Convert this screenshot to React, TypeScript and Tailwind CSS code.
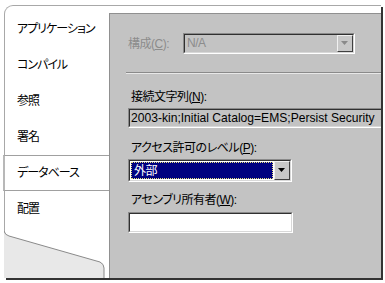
import React from "react";

const tabs = ["アプリケーション", "コンパイル", "参照", "署名", "データベース", "配置"];

const Mnemonic = ({ text, letter }: { text: string; letter: string }) => (
  <span>
    {text}(<u className="underline-offset-1">{letter}</u>):
  </span>
);

const DropButton = ({ disabled }: { disabled?: boolean }) => (
  <div className="flex h-full w-[16px] items-center justify-center border border-t-[#f0f0f0] border-l-[#f0f0f0] border-b-[#404040] border-r-[#404040] bg-[#c8c8c8]">
    <svg width="8" height="5" viewBox="0 0 8 5">
      <path d="M0 0h7L3.5 4z" fill={disabled ? "#8a8a8a" : "#000"} />
    </svg>
  </div>
);

const Sunken = ({
  className,
  innerClass,
  children,
}: {
  className: string;
  innerClass: string;
  children?: React.ReactNode;
}) => (
  <div
    className={`border border-t-[#8a8a8a] border-l-[#8a8a8a] border-b-white border-r-white ${className}`}
  >
    <div
      className={`flex h-full border border-t-[#303030] border-l-[#303030] border-b-[#d8d8d8] border-r-[#d8d8d8] ${innerClass}`}
    >
      {children}
    </div>
  </div>
);

export default function App() {
  return (
    <div className="h-[283px] w-[385px] overflow-hidden bg-white pl-[4px] pt-[5px] font-['Liberation_Sans','Noto_Sans_CJK_JP',sans-serif] text-[12px] leading-[16px] text-black [font-feature-settings:'palt']">
      <div className="flex h-[273px] w-[377px] rounded-tl-[9px] border-l border-t border-[#a8a8a8] shadow-[2px_2px_0_#333]">
        {/* tab list */}
        <div className="relative flex w-[104px] flex-col pt-[5px] tracking-[-1px]">
          {tabs.map((t) =>
            t === "データベース" ? (
              <div
                key={t}
                className="-ml-[2px] flex h-[36px] items-center border-y border-l-2 border-[#a0a0a0] border-l-[#b8b8b8] bg-white pl-[12px]"
              >
                {t}
              </div>
            ) : (
              <div key={t} className="flex h-[36px] items-center pl-[12px]">
                {t}
              </div>
            )
          )}
          <svg
            className="absolute bottom-0 left-[-1px]"
            width="106"
            height="48"
            viewBox="0 0 106 48"
          >
            <path
              d="M0 1 Q1 5 5 6 L96 32 Q100 34 100 38 L100 48 L0 48 Z"
              fill="#e8e8e8"
            />
            <path
              d="M0 1 Q1 5 5 6 L96 32 Q100 34 100 38 L100 48"
              fill="none"
              stroke="#8a8a8a"
              strokeWidth="1"
            />
          </svg>
        </div>

        {/* property page */}
        <div className="mt-[7px] flex flex-1 flex-col overflow-hidden border-l border-t border-[#909090] bg-[#c3c3c3] pl-[18px] pt-[19px] tracking-[-0.5px]">
          <div className="flex h-[21px] items-center">
            <div className="w-[55px] text-[#8c8c8c]">
              <Mnemonic text="構成" letter="C" />
            </div>
            <Sunken className="h-[21px] w-[172px]" innerClass="bg-[#c3c3c3]">
              <div className="flex-1 pl-[2px] leading-[17px] text-[#8c8c8c]">N/A</div>
              <DropButton disabled />
            </Sunken>
          </div>

          <div className="-ml-[2px] mt-[18px] h-[2px] border-t border-b border-t-[#8a8a8a] border-b-[#e8e8e8]" />

          <div className="mt-[15px] pl-[3px]">
            <Mnemonic text="接続文字列" letter="N" />
          </div>
          <Sunken className="mt-[3px] h-[20px] w-[300px]" innerClass="items-center bg-[#c3c3c3] pl-[1px]">
            <span className="whitespace-nowrap text-[12.1px] tracking-normal">
              2003-kin;Initial Catalog=EMS;Persist Security
            </span>
          </Sunken>

          <div className="mt-[12px] pl-[3px]">
            <Mnemonic text="アクセス許可のレベル" letter="P" />
          </div>
          <Sunken className="mt-[3px] h-[23px] w-[164px]" innerClass="bg-white">
            <div className="flex flex-1 p-[1px]">
              <div className="flex flex-1 items-center border border-dotted border-[#e8e080] bg-[#000080] pl-[2px] text-white">
                外部
              </div>
            </div>
            <DropButton />
          </Sunken>

          <div className="mt-[10px] pl-[3px]">
            <Mnemonic text="アセンブリ所有者" letter="W" />
          </div>
          <Sunken className="mt-[4px] h-[21px] w-[165px]" innerClass="bg-white" />
        </div>
      </div>
    </div>
  );
}
